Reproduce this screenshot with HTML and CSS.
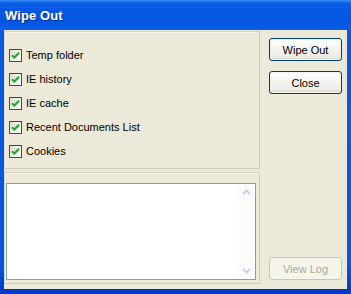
FILE: index.html
```html
<!DOCTYPE html>
<html>
<head>
<meta charset="utf-8">
<link rel="stylesheet" href="styles.css">
</head>
<body>
<div class="window">
  <div class="titlebar"><span class="title">Wipe Out</span></div>
  <div class="frame">
    <div class="left">
      <div class="panel top-panel">
        <label class="row"><span class="cb"><svg viewBox="0 0 13 13" width="13" height="13"><path d="M3 6.2 L5.3 8.6 L10 3.8" fill="none" stroke="#21A121" stroke-width="2"/></svg></span><span>Temp folder</span></label>
        <label class="row"><span class="cb"><svg viewBox="0 0 13 13" width="13" height="13"><path d="M3 6.2 L5.3 8.6 L10 3.8" fill="none" stroke="#21A121" stroke-width="2"/></svg></span><span>IE history</span></label>
        <label class="row"><span class="cb"><svg viewBox="0 0 13 13" width="13" height="13"><path d="M3 6.2 L5.3 8.6 L10 3.8" fill="none" stroke="#21A121" stroke-width="2"/></svg></span><span>IE cache</span></label>
        <label class="row"><span class="cb"><svg viewBox="0 0 13 13" width="13" height="13"><path d="M3 6.2 L5.3 8.6 L10 3.8" fill="none" stroke="#21A121" stroke-width="2"/></svg></span><span>Recent Documents List</span></label>
        <label class="row"><span class="cb"><svg viewBox="0 0 13 13" width="13" height="13"><path d="M3 6.2 L5.3 8.6 L10 3.8" fill="none" stroke="#21A121" stroke-width="2"/></svg></span><span>Cookies</span></label>
      </div>
      <div class="panel bottom-panel">
        <div class="log">
          <div class="log-text"></div>
          <div class="scrollbar">
            <div class="sb-btn"><svg viewBox="0 0 15 15" width="15" height="15"><path d="M4 9 L7.5 5.5 L11 9" fill="none" stroke="#C2C9D6" stroke-width="1.6"/></svg></div>
            <div class="sb-track"></div>
            <div class="sb-btn"><svg viewBox="0 0 15 15" width="15" height="15"><path d="M4 6 L7.5 9.5 L11 6" fill="none" stroke="#C2C9D6" stroke-width="1.6"/></svg></div>
          </div>
        </div>
      </div>
    </div>
    <div class="right">
      <button class="btn">Wipe Out</button>
      <button class="btn">Close</button>
      <button class="btn disabled">View Log</button>
    </div>
  </div>
</div>
</body>
</html>
```
FILE: styles.css
```css
html, body {
  margin: 0;
  padding: 0;
}
body {
  font-family: "Liberation Sans", Arial, sans-serif;
  font-size: 11px;
  color: #000;
}
.window {
  width: 351px;
  height: 294px;
  display: flex;
  flex-direction: column;
  background: linear-gradient(to bottom, #0A5AE0 0%, #0757DE 90%, #0036C8 100%);
  overflow: hidden;
}
.titlebar {
  height: 30px;
  flex: none;
  display: flex;
  align-items: center;
  padding-left: 5px;
  box-sizing: border-box;
  background: linear-gradient(to bottom, #3B8CF5 0px, #0A5FE6 3px, #0556E0 12px, #0456E2 22px, #0A5EE8 30px);
}
.title {
  color: #fff;
  font-weight: bold;
  font-size: 13px;
  text-shadow: 1px 1px 0 #0A2E8C;
  letter-spacing: 0.1px;
}
.frame {
  flex: 1;
  margin: 0 4px 5px 4px;
  background: #ECE9D8;
  display: flex;
  gap: 9px;
  min-height: 0;
}
.left {
  width: 256px;
  flex: none;
  display: flex;
  flex-direction: column;
  gap: 3px;
  padding-top: 1px;
  padding-bottom: 5px;
  box-sizing: border-box;
}
.panel {
  border: 1px solid #D6D2C2;
  border-right-color: #CFCBBA;
  border-bottom-color: #CFCBBA;
  box-shadow: inset 1px 1px 0 #F6F4EC;
  box-sizing: border-box;
}
.top-panel {
  height: 138px;
  flex: none;
  padding: 17px 0 0 4px;
  display: flex;
  flex-direction: column;
  gap: 11px;
}
.row {
  display: flex;
  align-items: center;
  gap: 4px;
  height: 13px;
  line-height: 13px;
}
.cb {
  width: 13px;
  height: 13px;
  box-sizing: border-box;
  border: 1px solid #1C5180;
  background: linear-gradient(135deg, #DCDCD7 0%, #F2F2EE 60%, #FFFFFF 100%);
  display: flex;
  flex: none;
  position: relative;
}
.cb svg {
  position: absolute;
  left: -1px;
  top: -1px;
}
.bottom-panel {
  flex: 1;
  padding: 10px 0 0 1px;
}
.log {
  width: 250px;
  height: 97px;
  box-sizing: border-box;
  border: 1px solid #7F9DB9;
  background: #fff;
  display: flex;
}
.log-text {
  flex: 1;
}
.scrollbar {
  width: 16px;
  display: flex;
  flex-direction: column;
  background: #FCFCFA;
  padding: 1px 1px 1px 0;
  box-sizing: border-box;
}
.sb-btn {
  height: 15px;
  width: 15px;
  background: #F8F9FC;
  border: 0;
  display: flex;
  align-items: center;
  justify-content: center;
}
.sb-track {
  flex: 1;
  background: #FBFBF9;
}
.right {
  width: 73px;
  display: flex;
  flex-direction: column;
  gap: 10px;
  padding: 8px 0 9px 0;
  box-sizing: border-box;
}
.btn {
  width: 73px;
  height: 23px;
  box-sizing: border-box;
  border: 1px solid #003C74;
  border-radius: 3px;
  background: linear-gradient(to bottom, #FFFFFF 0%, #F6F6F2 40%, #ECEBE4 85%, #D6D0C5 100%);
  font-family: "Liberation Sans", Arial, sans-serif;
  font-size: 11px;
  color: #000;
  padding: 0;
  box-shadow: inset 0 0 0 1px #F2F1EC;
}
.btn.disabled {
  margin-top: auto;
  border-color: #C9C7BA;
  color: #ACA899;
  background: #F5F4EA;
  box-shadow: none;
}
```
